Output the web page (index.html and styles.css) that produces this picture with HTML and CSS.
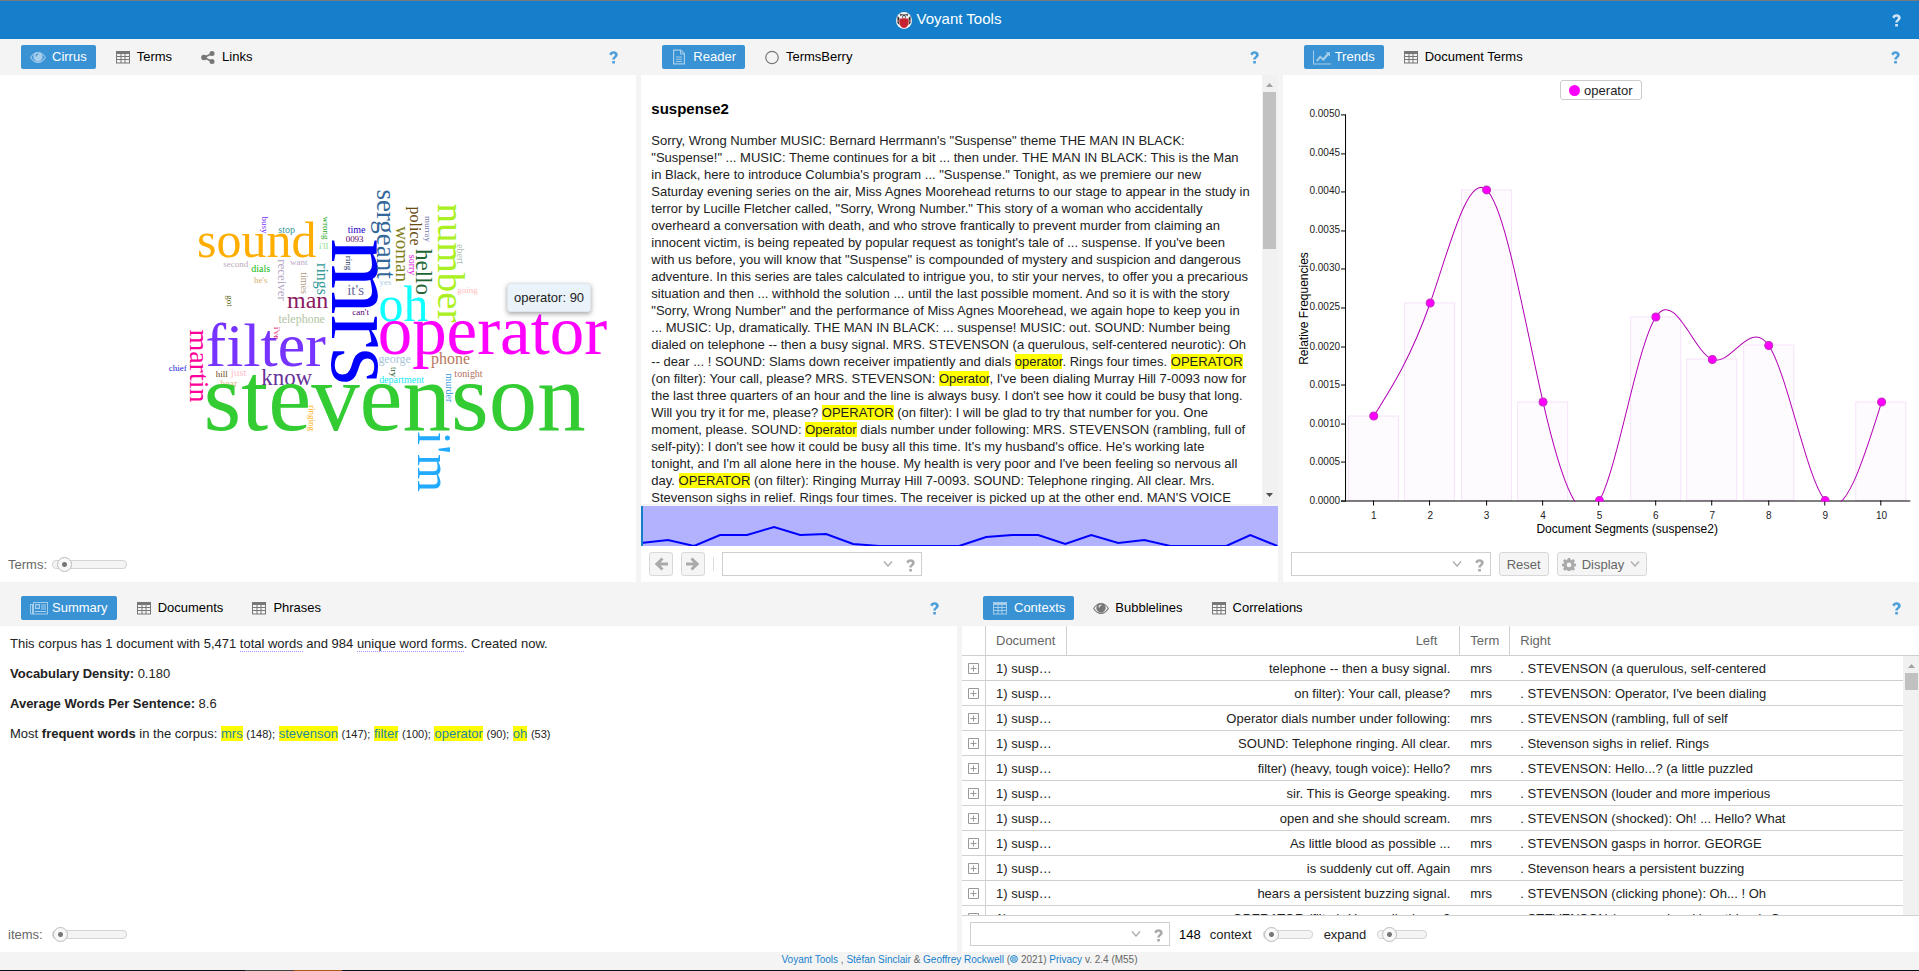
FILE: index.html
```html
<!DOCTYPE html>
<html lang="en">
<head>
<meta charset="utf-8">
<title>Voyant Tools</title>
<link rel="stylesheet" href="styles.css">
</head>
<body>
<svg class="defs" aria-hidden="true">
  <symbol id="i-eye" viewBox="0 0 16 16"><path d="M0 8.500C2 5 5 3 8 3s6 2 8 5.500C14 12 11 14 8 14S2 12 0 8.500zm1.300 0C3 11.300 5.500 12.900 8 12.900s5-1.600 6.700-4.400C13.800 7 12.800 5.900 11.400 5.100A4.500 4.500 0 1 1 4.600 5.100C3.200 5.900 2.200 7 1.300 8.500zM5.600 7.500h1A1.900 1.900 0 0 1 8.400 5.400v-1A2.900 2.900 0 0 0 5.600 7.500z" fill-rule="evenodd"/></symbol>
  <symbol id="i-table" viewBox="0 0 16 16"><path d="M1 2h14v12.500H1zM2 5v2h3.500V5zm4.500 0v2h3V5zm4 0v2H14V5zM2 8v2h3.500V8zm4.500 0v2h3V8zm4 0v2H14V8zM2 11v2.500h3.500V11zm4.500 0v2.500h3V11zm4 0v2.500H14V11z" fill-rule="evenodd"/></symbol>
  <symbol id="i-share" viewBox="0 0 16 16"><circle cx="4" cy="8.500" r="2.800"/><circle cx="12" cy="4.500" r="2.500"/><circle cx="12" cy="12.500" r="2.500"/><path d="M12 4.500L4 8.500l8 4" fill="none" stroke="currentColor" stroke-width="1.600"/></symbol>
  <symbol id="i-file" viewBox="0 0 16 16"><path d="M2 .5h8l4 4v11H2zM3.200 1.700v12.600h9.600V5.500H9V1.700zm7 .3v2.500h2.400zM5 7.500h6v1H5zm0 2.200h6v1H5zm0 2.200h6v1H5z" fill-rule="evenodd"/></symbol>
  <symbol id="i-circle" viewBox="0 0 16 16"><circle cx="8" cy="8.500" r="6.200" fill="none" stroke="currentColor" stroke-width="1.200"/></symbol>
  <symbol id="i-chart" viewBox="0 0 18 16"><path d="M0 1.500h1v13h17v1H0zM3 11.500l4-5 3 2.500 4-4.500-1.500-1.300H17v4.300l-1.500-1.200L10.500 12 7.300 9.200l-2.700 3.500z"/></symbol>
  <symbol id="i-news" viewBox="0 0 18 16"><path d="M3 2h15v12.500H1.500A1.500 1.500 0 0 1 0 13V4h3zm1 1v10.500h13V3zM1 5v8c0 .700 1 .700 1 0V5zm4-1h5v5H5zm1.200 1.200v2.600h2.600V5.200zM11 4.500h5v1h-5zm0 2h5v1h-5zm0 2h5v1h-5zM5 11h11v1H5z" fill-rule="evenodd"/></symbol>
  <symbol id="i-help" viewBox="0 0 9 13"><path d="M.3 3.200C1 1.200 2.500.3 4.500.3 7 .3 8.700 1.800 8.700 3.800c0 2.700-2.900 2.900-2.900 4.800H3.300C3.100 6 5.900 5.600 5.900 4c0-.800-.600-1.300-1.500-1.300-1 0-1.400.500-1.900 1.700zM3.200 9.900h2.700v2.700H3.200z"/></symbol>
  <symbol id="i-down" viewBox="0 0 10 6"><path d="M1 .5l4 4.500L9 .5" fill="none" stroke="currentColor" stroke-width="1.200"/></symbol>
  <symbol id="i-right" viewBox="0 0 14 14"><path d="M0 5.500h7.500L4.500 2.600 6.400.6 13.300 7l-6.900 6.400-1.900-2 3-2.900H0z"/></symbol>
  <symbol id="i-gear" viewBox="0 0 16 16"><path d="M6.600 1h2.800l.4 2 1.300.6 1.700-1.200 2 2-1.200 1.700.5 1.200 2 .4v2.800l-2 .4-.5 1.200 1.200 1.700-2 2-1.700-1.200-1.300.5-.4 2H6.600l-.4-2-1.200-.5-1.800 1.200-2-2 1.200-1.700-.5-1.300-2-.3V7.700l2-.4.5-1.200L1.200 4.400l2-2L5 3.600 6.200 3zM8 6.300a2.700 2.700 0 1 0 0 5.400 2.700 2.700 0 0 0 0-5.400z" fill-rule="evenodd"/></symbol>
  <symbol id="i-plus" viewBox="0 0 11 11"><path d="M.5.5h10v10H.5zM2.500 5.500h6M5.500 2.500v6" fill="none" stroke="currentColor"/></symbol>
  <symbol id="i-up-tri" viewBox="0 0 7 4"><path d="M3.500 0L7 4H0z"/></symbol>
  <symbol id="i-down-tri" viewBox="0 0 7 4"><path d="M0 0h7L3.500 4z"/></symbol>
</svg>

<header class="topbar">
  <h1 class="brand">
    <svg class="logo" viewBox="0 0 16 17"><ellipse cx="8" cy="8.500" rx="8" ry="8.500" fill="#f4f1f1"/><path d="M1.500 4l2 2-1 3 1 4-2-2zM14.500 4l-2 2 1 3-1 4 2-2z" fill="#2b2528"/><path d="M4 1.500l2 1h4l2-1-.5 3h-7z" fill="#2b2528"/><circle cx="6" cy="5" r="1.800" fill="#fff"/><circle cx="10" cy="5" r="1.800" fill="#fff"/><circle cx="6.500" cy="5" r=".7" fill="#222"/><circle cx="9.500" cy="5" r=".7" fill="#222"/><path d="M3.500 7c1.500-1 7.500-1 9 0C13.500 12 11 16 8 16S2.500 12 3.500 7z" fill="#c4232f"/></svg>
    Voyant Tools
  </h1>
  <button class="help light" aria-label="Help"><svg><use href="#i-help"/></svg></button>
</header>

<main class="workspace">
  <div class="row row-top">
    <section class="panel">
      <nav class="tabs">
        <button class="tab active"><svg><use href="#i-eye"/></svg>Cirrus</button>
        <button class="tab"><svg><use href="#i-table"/></svg>Terms</button>
        <button class="tab"><svg><use href="#i-share"/></svg>Links</button>
        <button class="help" aria-label="Help"><svg><use href="#i-help"/></svg></button>
      </nav>
      <div class="body">
        <div class="cloud">
          <svg class="fill" viewBox="0 75 637 471" id="cloud"></svg>
          <div class="tooltip">operator: 90</div>
        </div>
        <div class="toolbar">
          <label class="muted" for="terms">Terms:</label>
          <input class="slider" id="terms" type="range" min="0" max="100" value="7">
        </div>
      </div>
    </section>

    <section class="panel">
      <nav class="tabs">
        <button class="tab active"><svg><use href="#i-file"/></svg>Reader</button>
        <button class="tab"><svg><use href="#i-circle"/></svg>TermsBerry</button>
        <button class="help" aria-label="Help"><svg><use href="#i-help"/></svg></button>
      </nav>
      <div class="body">
        <div class="scroller">
          <article class="reader">
            <h2>suspense2</h2>
            <p>Sorry, Wrong Number MUSIC: Bernard Herrmann's "Suspense" theme THE MAN IN BLACK: "Suspense!" ... MUSIC: Theme continues for a bit ... then under. THE MAN IN BLACK: This is the Man in Black, here to introduce Columbia's program ... "Suspense." Tonight, as we premiere our new Saturday evening series on the air, Miss Agnes Moorehead returns to our stage to appear in the study in terror by Lucille Fletcher called, "Sorry, Wrong Number." This story of a woman who accidentally overheard a conversation with death, and who strove frantically to prevent murder from claiming an innocent victim, is being repeated by popular request as tonight's tale of ... suspense. If you've been with us before, you will know that "Suspense" is compounded of mystery and suspicion and dangerous adventure. In this series are tales calculated to intrigue you, to stir your nerves, to offer you a precarious situation and then ... withhold the solution ... until the last possible moment. And so it is with the story "Sorry, Wrong Number" and the performance of Miss Agnes Moorehead, we again hope to keep you in ... MUSIC: Up, dramatically. THE MAN IN BLACK: ... suspense! MUSIC: out. SOUND: Number being dialed on telephone -- then a busy signal. MRS. STEVENSON (a querulous, self-centered neurotic): Oh -- dear ... ! SOUND: Slams down receiver impatiently and dials <mark>operator</mark>. Rings four times. <mark>OPERATOR</mark> (on filter): Your call, please? MRS. STEVENSON: <mark>Operator</mark>, I've been dialing Murray Hill 7-0093 now for the last three quarters of an hour and the line is always busy. I don't see how it could be busy that long. Will you try it for me, please? <mark>OPERATOR</mark> (on filter): I will be glad to try that number for you. One moment, please. SOUND: <mark>Operator</mark> dials number under following: MRS. STEVENSON (rambling, full of self-pity): I don't see how it could be busy all this time. It's my husband's office. He's working late<br>tonight, and I'm all alone here in the house. My health is very poor and I've been feeling so nervous all day. <mark>OPERATOR</mark> (on filter): Ringing Murray Hill 7-0093. SOUND: Telephone ringing. All clear. Mrs. Stevenson sighs in relief. Rings four times. The receiver is picked up at the other end. MAN'S VOICE</p>
          </article>
          <div class="scrollbar">
            <svg class="arrow dim"><use href="#i-up-tri"/></svg>
            <div class="thumb long"></div>
            <svg class="arrow"><use href="#i-down-tri"/></svg>
          </div>
        </div>
        <svg class="strip" viewBox="0 0 636 40" preserveAspectRatio="none"><polyline points="0,37 27,34 53,40 79,29 106,29 133,21 159,29 185,28 212,38 238,40 318,40 345,31 371,29 397,29 424,38 450,29 477,37 503,34 529,40 585,40 609,29 636,40" fill="none" stroke="#00f" stroke-width="2"/><path d="M0 0h2v40H0z" fill="#157fcc"/></svg>
        <div class="toolbar">
          <button class="btn square" aria-label="Previous"><svg class="flip"><use href="#i-right"/></svg></button>
          <button class="btn square" aria-label="Next"><svg><use href="#i-right"/></svg></button>
          <span class="divider"></span>
          <div class="combo"><input type="text" aria-label="Search reader"><svg class="chev"><use href="#i-down"/></svg><svg class="q"><use href="#i-help"/></svg></div>
        </div>
      </div>
    </section>

    <section class="panel">
      <nav class="tabs">
        <button class="tab active"><svg class="wide"><use href="#i-chart"/></svg>Trends</button>
        <button class="tab"><svg><use href="#i-table"/></svg>Document Terms</button>
        <button class="help" aria-label="Help"><svg><use href="#i-help"/></svg></button>
      </nav>
      <div class="body">
        <div class="chart">
          <button class="legend"><span class="dot"></span>operator</button>
          <svg class="fill" viewBox="1283 101 636 445" id="chart">
            <defs><clipPath id="plot"><path d="M1346 101h570v401h-570z"/></clipPath></defs>
            <g id="bars" class="bars"></g>
            <path class="axis" d="M1345.500 115v387M1341 501.500h569"/>
            <g id="ticks"></g>
            <g clip-path="url(#plot)">
              <path class="curve" d="M1373.700 416.500C1392.500 386.700 1411.300 357 1430.100 303.500C1448.900 250 1467.700 172.900 1486.500 190.500C1505.300 208.100 1524.100 320.600 1542.900 402.500C1561.700 484.400 1580.500 535.600 1599.300 501C1618.100 466.400 1636.900 345.900 1655.700 317.500C1674.500 289.100 1693.300 352.700 1712.100 360C1730.900 367.300 1749.700 318.100 1768.500 346C1787.300 373.900 1806.100 478.700 1824.900 501C1843.700 523.300 1862.500 462.900 1881.300 402.500"/>
              <g id="marks" class="marks"></g>
            </g>
            <text class="axis-title" x="1627" y="533">Document Segments (suspense2)</text>
            <text class="axis-title" transform="translate(1308 309) rotate(-90)">Relative Frequencies</text>
          </svg>
        </div>
        <div class="toolbar">
          <div class="combo"><input type="text" aria-label="Search trends"><svg class="chev"><use href="#i-down"/></svg><svg class="q"><use href="#i-help"/></svg></div>
          <button class="btn">Reset</button>
          <button class="btn menu"><svg class="gear"><use href="#i-gear"/></svg>Display<svg class="chev"><use href="#i-down"/></svg></button>
        </div>
      </div>
    </section>
  </div>

  <div class="row row-bottom">
    <section class="panel">
      <nav class="tabs">
        <button class="tab active"><svg class="wide"><use href="#i-news"/></svg>Summary</button>
        <button class="tab"><svg><use href="#i-table"/></svg>Documents</button>
        <button class="tab"><svg><use href="#i-table"/></svg>Phrases</button>
        <button class="help" aria-label="Help"><svg><use href="#i-help"/></svg></button>
      </nav>
      <div class="body">
        <div class="summary">
          <p>This corpus has 1 document with 5,471 <span class="hint">total words</span> and 984 <span class="hint">unique word forms</span>. Created now.</p>
          <p><b>Vocabulary Density:</b> 0.180</p>
          <p><b>Average Words Per Sentence:</b> 8.6</p>
          <p>Most <b>frequent words</b> in the corpus: <a href="#mrs">mrs</a> <small>(148);</small> <a href="#stevenson">stevenson</a> <small>(147);</small> <a href="#filter">filter</a> <small>(100);</small> <a href="#operator">operator</a> <small>(90);</small> <a href="#oh">oh</a> <small>(53)</small></p>
        </div>
        <div class="toolbar">
          <label class="muted" for="items">items:</label>
          <input class="slider" id="items" type="range" min="0" max="100" value="0">
        </div>
      </div>
    </section>

    <section class="panel">
      <nav class="tabs">
        <button class="tab active"><svg><use href="#i-table"/></svg>Contexts</button>
        <button class="tab"><svg><use href="#i-eye"/></svg>Bubblelines</button>
        <button class="tab"><svg><use href="#i-table"/></svg>Correlations</button>
        <button class="help" aria-label="Help"><svg><use href="#i-help"/></svg></button>
      </nav>
      <div class="body">
        <div class="grid">
          <table>
            <colgroup><col class="c-exp"><col class="c-doc"><col class="c-left"><col class="c-term"><col class="c-right"></colgroup>
            <thead><tr><th></th><th>Document</th><th class="left">Left</th><th>Term</th><th>Right</th></tr></thead>
            <tbody id="rows"></tbody>
          </table>
          <div class="scrollbar">
            <svg class="arrow dim"><use href="#i-up-tri"/></svg>
            <div class="thumb short"></div>
            <svg class="arrow"><use href="#i-down-tri"/></svg>
          </div>
        </div>
        <div class="toolbar ruled">
          <div class="combo"><input type="text" aria-label="Search contexts"><svg class="chev"><use href="#i-down"/></svg><svg class="q"><use href="#i-help"/></svg></div>
          <span class="count">148</span>
          <label for="context">context</label>
          <input class="slider small" id="context" type="range" min="0" max="100" value="0">
          <label for="expand">expand</label>
          <input class="slider small" id="expand" type="range" min="0" max="100" value="11">
        </div>
      </div>
    </section>
  </div>
</main>

<footer class="footer">
  <p><a href="#voyant">Voyant Tools</a> , <a href="#sinclair">Stéfan Sinclair</a> &amp; <a href="#rockwell">Geoffrey Rockwell</a> (<a href="#license" aria-label="License"><svg viewBox="0 0 8 8"><circle cx="4" cy="4" r="3.400" fill="none" stroke="currentColor"/><path d="M2 3h4M2 5h4" stroke="currentColor"/></svg></a> 2021) <a href="#privacy">Privacy</a> v. 2.4 (M55)</p>
</footer>
<div class="edge"></div>
<script src="app.js"></script>
</body>
</html>
```
FILE: styles.css
```css
* { box-sizing: border-box; }
html, body { height: 100%; }
body {
  margin: 0;
  display: flex;
  flex-direction: column;
  background: #f4f4f4;
  color: #222;
  font: 13px/17px "Liberation Sans", Arial, sans-serif;
  overflow: hidden;
}
h1, h2, p { margin: 0; }
button, input { font: inherit; margin: 0; }
button { cursor: pointer; }
svg { fill: currentColor; flex: none; }
.defs { position: absolute; width: 0; height: 0; }

.topbar {
  flex: none;
  display: flex;
  align-items: center;
  height: 39px;
  border-top: 1px solid #77797c;
  background: #157fcc;
  color: #fff;
}
.brand {
  flex: 1;
  display: flex;
  align-items: center;
  justify-content: center;
  gap: 5px;
  padding: 0 0 3px 9px;
  font-size: 15px;
  font-weight: 400;
}
.logo { width: 16px; height: 17px; margin-top: 3px; }
.help {
  display: flex;
  justify-content: center;
  width: 16px;
  margin: 0 15px 0 auto;
  padding: 0;
  border: 0;
  background: none;
  color: #4c9fdb;
}
.help svg { width: 9px; height: 13px; }
.help.light { color: #d3e6f5; }

.workspace { flex: 1; min-height: 0; display: flex; flex-direction: column; gap: 8px; }
.row { min-height: 0; display: flex; gap: 5px; }
.row-top { flex: 3 1 0; }
.row-bottom { flex: 2 1 0; }
.panel { flex: 1 1 0; min-width: 0; display: flex; flex-direction: column; }
.tabs {
  flex: none;
  display: flex;
  align-items: center;
  gap: 10px;
  height: 36px;
  padding-left: 21px;
}
.tab {
  display: flex;
  align-items: center;
  gap: 6px;
  height: 24px;
  padding: 0 9px 2px;
  border: 0;
  border-radius: 2px;
  background: none;
  color: #000;
}
.tab svg { width: 16px; height: 16px; margin-top: 1px; color: #777; }
.tab svg.wide { width: 18px; margin-right: -2px; }
.tab.active { background: #3892d4; color: #fff; }
.tab.active svg { color: #a5cdec; }
.body { flex: 1; min-height: 0; display: flex; flex-direction: column; background: #fff; }
.toolbar {
  flex: none;
  display: flex;
  align-items: center;
  gap: 8px;
  height: 36px;
  padding: 0 8px;
}
.toolbar.ruled { gap: 9px; height: 37px; border-top: 1px solid #d0d0d0; }
.muted { width: 36px; white-space: nowrap; color: #666; }

.cloud { position: relative; flex: 1; min-height: 0; }
.fill { display: block; width: 100%; height: 100%; }
.cloud text { font-family: "Liberation Serif", serif; text-anchor: middle; }
.tooltip {
  position: absolute;
  left: 507px;
  top: 208px;
  padding: 5px 6px;
  border: 1px solid #dfe5ea;
  border-radius: 3px;
  background: #eaf3fa;
  box-shadow: 0 2px 5px rgba(0, 0, 0, .35);
}

.scroller { flex: 1; min-height: 0; display: flex; }
.reader { flex: 1; min-width: 0; padding: 25px 10px 0 10px; overflow: hidden; }
.reader h2 { margin-bottom: 15px; font-size: 15px; color: #000; }
mark { background: #ff0; color: inherit; }
.scrollbar {
  flex: none;
  display: flex;
  flex-direction: column;
  align-items: center;
  width: 16px;
  padding: 8px 0 7px;
  background: #f1f1f1;
}
.arrow { width: 7px; height: 4px; color: #505050; margin-top: auto; }
.arrow.dim { color: #a3a3a3; margin: 0 0 5px; }
.thumb { width: 13px; background: #c1c1c1; }
.thumb.long { height: 38%; }
.thumb.short { height: 17px; }
.strip {
  display: block;
  width: 100%;
  height: 42px;
  border-top: 2px solid #f4f4f4;
  background: #b2b2ff;
}
.btn {
  display: flex;
  align-items: center;
  gap: 6px;
  height: 24px;
  padding: 0 7px;
  border: 1px solid #d8d8d8;
  border-radius: 3px;
  background: #f5f5f5;
  color: #666;
}
.btn svg { color: #aaa; }
.btn.menu { padding: 0 6px 0 4px; }
.btn.square { justify-content: center; width: 24px; padding: 0; }
.btn.square svg { width: 14px; height: 14px; }
.flip { transform: rotate(180deg); }
.gear { width: 14px; height: 14px; }
.divider { width: 1px; height: 14px; background: #ddd; }
.combo {
  display: flex;
  align-items: center;
  width: 200px;
  height: 24px;
  padding-right: 6px;
  border: 1px solid #cfcfcf;
  background: #fff;
  color: #aaa;
}
.combo input { flex: 1; min-width: 0; height: 22px; border: 0; padding: 0 6px; outline: 0; background: none; }
.chev { width: 10px; height: 6px; }
.combo .q { width: 9px; height: 13px; margin: 2px 0 0 13px; }

.slider {
  appearance: none;
  width: 75px;
  height: 14px;
  background: none;
}
.slider.small { width: 50px; margin: 0 2px; }
.slider::-webkit-slider-runnable-track {
  height: 9px;
  border: 1px solid #d4d4d4;
  border-radius: 4px;
  background: #f4f4f4;
}
.slider::-webkit-slider-thumb {
  appearance: none;
  width: 15px;
  height: 15px;
  margin-top: -4px;
  border: 1px solid #bbb;
  border-radius: 50%;
  background: radial-gradient(circle, #777 2px, #f8f8f8 3px);
}

.chart { flex: 1; min-height: 0; display: flex; flex-direction: column; align-items: center; padding-top: 5px; }
.chart .fill { flex: 1; min-height: 0; }
.legend {
  display: flex;
  align-items: center;
  gap: 4px;
  height: 20px;
  padding: 0 8px;
  border: 1px solid #ccc;
  border-radius: 3px;
  background: #fff;
  color: #222;
}
.dot { width: 11px; height: 11px; border-radius: 50%; background: #f0f; }
.bars { fill: #fefbff; stroke: #f6e2fa; }
.axis { fill: none; stroke: #000; }
.curve { fill: none; stroke: #b300b3; stroke-width: 1; }
.marks { fill: #f0f; stroke: #b3b; }
.tick { font-size: 10px; fill: #222; }
.tick.y { text-anchor: end; }
.tick.x { text-anchor: middle; }
.axis-title { font-size: 12px; text-anchor: middle; fill: #000; }

.summary { flex: 1; min-height: 0; padding: 9px 10px; display: flex; flex-direction: column; gap: 13px; }
.hint { border-bottom: 1px dotted #99f; }
.summary a { background: #ff0; color: #1f86a3; text-decoration: none; }
.summary small { font-size: 11px; }

.grid {
  flex: 1;
  min-height: 0;
  display: grid;
  grid-template-columns: 1fr 16px;
  overflow: hidden;
  background: linear-gradient(#fff 29px, #d0d0d0 29px, #d0d0d0 30px, #fff 30px);
}
.grid .scrollbar { margin-top: 30px; }
table { width: 100%; align-self: start; border-collapse: separate; border-spacing: 0; table-layout: fixed; }
.c-exp { width: 24px; }
.c-doc { width: 81px; }
.c-left { width: 41.8%; }
.c-term { width: 50px; }
th, td {
  padding: 0 10px;
  border-bottom: 1px solid #d0d0d0;
  text-align: left;
  font-weight: 400;
  white-space: nowrap;
  overflow: hidden;
  text-overflow: ellipsis;
}
th { height: 30px; color: #666; border-right: 1px solid #d0d0d0; }
th:last-child { border-right: 0; }
th.left { padding-right: 22px; text-align: right; }
td { height: 25px; }
td.exp { padding: 0; text-align: center; border-right: 1px solid #d0d0d0; }
td.left { text-align: right; }
.expander { display: flex; width: 11px; height: 11px; margin: 0 auto; padding: 0; border: 0; background: none; color: #999; }
.expander svg { width: 11px; height: 11px; }
.count { color: #000; }

.footer { flex: none; height: 18px; text-align: center; font-size: 10px; line-height: 16px; color: #666; }
.footer a { color: #157fcc; text-decoration: none; }
.footer svg { width: 8px; height: 8px; }
.edge {
  flex: none;
  height: 1px;
  background: linear-gradient(90deg, #0a0f1c 245px, #444 245px, #444 294px, #b3581c 294px, #b3581c 342px, #0a0f1c 342px);
}
```
FILE: app.js
```js
const NS = 'http://www.w3.org/2000/svg';
function add(parent, name, attrs, text) {
  const el = document.createElementNS(NS, name);
  for (const key in attrs) el.setAttribute(key, attrs[key]);
  if (text) el.textContent = text;
  parent.appendChild(el);
}

// word, centre x, baseline y, size, colour
const across = [
  ['sound', 257, 257, 50, '#ffae00'], ['stop', 287, 233, 10, '#339999'], ['time', 357, 233, 10, '#2200cc'],
  ['0093', 355, 242, 9, '#660066'], ["i'll", 324, 249, 9, '#88dd88'], ['second', 236, 267, 9, '#bbaabb'],
  ['dials', 261, 272, 10, '#11bb11'], ["he's", 261, 283, 9, '#d8b070'], ['want', 299, 265, 9, '#bba8cc'],
  ['man', 308, 308, 24, '#8b1a62'], ['telephone', 302, 323, 12, '#b4c4a4'], ["it's", 356, 295, 15, '#6a6a9a'],
  ["can't", 361, 315, 9, '#550077'], ['filter', 266, 366, 62, '#7733ff'], ['hill', 222, 377, 9, '#6b4a20'],
  ['just', 239, 376, 11, '#ffc0cb'], ['hear', 229, 387, 10, '#e0b888'], ['know', 287, 385, 23, '#663399'],
  ['stevenson', 395, 430, 97, '#33cc33'], ['yes', 386, 285, 9, '#aaccdd'], ['oh', 404, 321, 50, '#11ffff'],
  ['operator', 493, 354, 69, '#ff00ff'], ['george', 395, 363, 12, '#aac4d8'], ['phone', 451, 364, 16, '#b87860'],
  ['department', 402, 383, 10, '#22e8f0'], ['tonight', 469, 377, 10, '#b0705a'], ['going', 468, 293, 9, '#ffbbbb'],
  ['chief', 178, 371, 9, '#2222dd']
];
// word, baseline x, centre y, size, colour
const down = [
  ['mrs', 332, 312, 98, '#0000ff'], ['sergeant', 377, 234, 27, '#336699'], ['woman', 396, 254, 19, '#808020'],
  ['police', 410, 226, 16, '#6b4a10'], ['murray', 425, 229, 9, '#7777aa'], ['sorry', 409, 265, 10, '#e011e0'],
  ['hello', 416, 272, 23, '#226633'], ['number', 438, 263, 39, '#aaf022'], ['ebert', 457, 254, 10, '#aabbaa'],
  ['ring', 346, 263, 9, '#223366'], ['rings', 317, 279, 16, '#339999'], ['wrong', 323, 228, 9, '#22aa22'],
  ['busy', 262, 225, 9, '#7733ff'], ['times', 301, 283, 10, '#b09880'], ['receiver', 278, 280, 13, '#b4a4c4'],
  ['got', 227, 301, 9, '#5a6a20'], ["i've", 274, 333, 9, '#dd0066'], ['martin', 190, 366, 28, '#ff0099'],
  ['ringing', 309, 418, 9, '#ffaa00'], ['try', 391, 372, 9, '#2a5a2a'], ['murder', 446, 388, 10, '#3399dd'],
  ["i'm", 418, 462, 49, '#22aaff']
];
const cloud = document.getElementById('cloud');
across.forEach(([w, x, y, s, c]) => add(cloud, 'text', { x, y, 'font-size': s, fill: c }, w));
down.forEach(([w, x, y, s, c]) => add(cloud, 'text', { transform: `translate(${x} ${y}) rotate(90)`, 'font-size': s, fill: c }, w));

// trend chart
const heights = [416.5, 303.5, 190.5, 402.5, 501, 317.5, 360, 346, 501, 402.5];
const bars = document.getElementById('bars');
const ticks = document.getElementById('ticks');
const marks = document.getElementById('marks');
heights.forEach((y, i) => {
  const x = 1373.7 + i * 56.4;
  if (y < 501) add(bars, 'rect', { x: Math.round(x - 25) - 0.5, y: Math.round(y) - 0.5, width: 50, height: 501 - y });
  add(marks, 'circle', { cx: x, cy: y, r: 4 });
  add(ticks, 'path', { class: 'axis', d: `M${Math.round(x) - 0.5} 501v5` });
  add(ticks, 'text', { class: 'tick x', x, y: 519 }, String(i + 1));
});
for (let i = 0; i <= 10; i++) {
  const y = Math.round(501 - i * 38.6);
  add(ticks, 'path', { class: 'axis', d: `M1341 ${y + 0.5}h5` });
  add(ticks, 'text', { class: 'tick y', x: 1340, y: y + 3 }, (i * 0.0005).toFixed(4));
}

// keyword contexts
const contexts = [
  ['telephone -- then a busy signal.', '. STEVENSON (a querulous, self-centered'],
  ['on filter): Your call, please?', '. STEVENSON: Operator, I\'ve been dialing'],
  ['Operator dials number under following:', '. STEVENSON (rambling, full of self'],
  ['SOUND: Telephone ringing. All clear.', '. Stevenson sighs in relief. Rings'],
  ['filter) (heavy, tough voice): Hello?', '. STEVENSON: Hello...? (a little puzzled'],
  ['sir. This is George speaking.', '. STEVENSON (louder and more imperious'],
  ['open and she should scream.', '. STEVENSON (shocked): Oh! ... Hello? What'],
  ['As little blood as possible ...', '. STEVENSON gasps in horror. GEORGE'],
  ['is suddenly cut off. Again', '. Stevenson hears a persistent buzzing'],
  ['hears a persistent buzzing signal.', '. STEVENSON (clicking phone): Oh... ! Oh'],
  ['OPERATOR (filter): Your call, please?', '. STEVENSON (unnerved and breathless): O']
];
document.getElementById('rows').innerHTML = contexts.map(([left, right]) =>
  `<tr><td class="exp"><button class="expander" aria-label="Expand"><svg><use href="#i-plus"/></svg></button></td><td>1) susp…</td><td class="left">${left}</td><td>mrs</td><td>${right}</td></tr>`).join('');
```
